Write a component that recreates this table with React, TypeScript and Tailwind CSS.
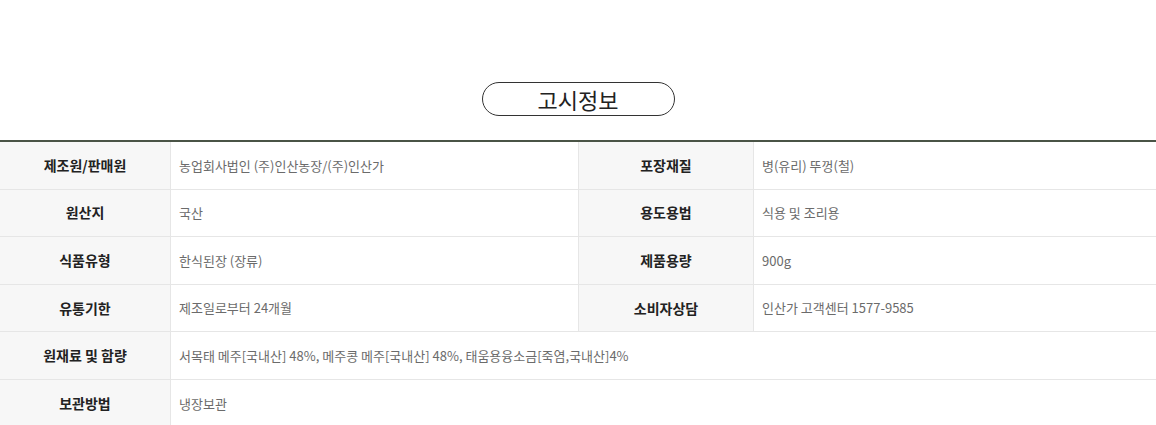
import React from "react";

type Cell = { label: string; value: string };

const rows: (Cell[])[] = [
  [
    { label: "제조원/판매원", value: "농업회사법인 (주)인산농장/(주)인산가" },
    { label: "포장재질", value: "병(유리) 뚜껑(철)" },
  ],
  [
    { label: "원산지", value: "국산" },
    { label: "용도용법", value: "식용 및 조리용" },
  ],
  [
    { label: "식품유형", value: "한식된장 (장류)" },
    { label: "제품용량", value: "900g" },
  ],
  [
    { label: "유통기한", value: "제조일로부터 24개월" },
    { label: "소비자상담", value: "인산가 고객센터 1577-9585" },
  ],
  [
    {
      label: "원재료 및 함량",
      value:
        "서목태 메주[국내산] 48%, 메주콩 메주[국내산] 48%, 태움용융소금[죽염,국내산]4%",
    },
  ],
  [{ label: "보관방법", value: "냉장보관" }],
];

const font = {
  fontFamily: '"Noto Sans CJK KR", "Noto Sans", sans-serif',
};

function Label({ text, w }: { text: string; w: string }) {
  return (
    <div
      className={`${w} flex shrink-0 items-center justify-center border-r border-[#e6e6e6] bg-[#f7f7f7] text-[14px] font-bold text-[#222]`}
    >
      {text}
    </div>
  );
}

export default function App() {
  return (
    <div className="min-h-screen bg-white" style={font}>
      <div className="pt-[82px]">
        <div className="flex justify-center">
          <div className="flex h-[34px] w-[193px] items-center justify-center rounded-full border border-[#333] text-[22px] leading-none text-[#222]">
            고시정보
          </div>
        </div>

        {/* 정보 표 */}
        <div className="mt-[24px] border-t-2 border-[#4a5446]">
          {rows.map((r, i) => (
            <div key={i} className="flex h-[47.6px] border-b border-[#e6e6e6]">
              <Label text={r[0].label} w="w-[171px]" />
              {r.length === 2 ? (
                <>
                  <div className="flex w-[408px] shrink-0 items-center border-r border-[#e6e6e6] pl-2 text-[13px] text-[#6b6b6b]">
                    {r[0].value}
                  </div>
                  <Label text={r[1].label} w="w-[175px]" />
                  <div className="flex flex-1 items-center pl-2 text-[13px] text-[#6b6b6b]">
                    {r[1].value}
                  </div>
                </>
              ) : (
                <div className="flex flex-1 items-center pl-2 text-[13px] text-[#6b6b6b]">
                  {r[0].value}
                </div>
              )}
            </div>
          ))}
        </div>
      </div>
    </div>
  );
}
